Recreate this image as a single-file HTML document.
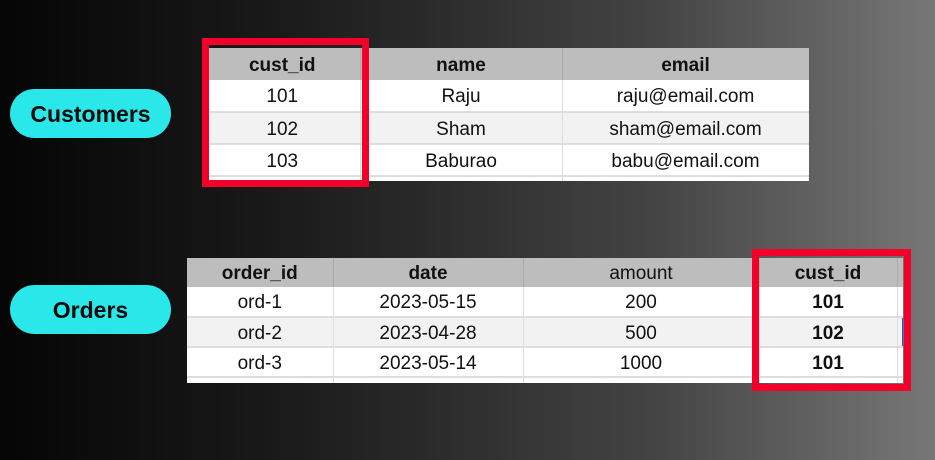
<!DOCTYPE html>
<html><head><style>
body{margin:0;width:935px;height:460px;overflow:hidden;background:linear-gradient(90deg,#050505 0%,#1a1a1a 30%,#444 70%,#777 100%);font-family:"Liberation Sans",sans-serif;position:relative}
.pill{position:absolute;left:10px;width:161px;height:49px;border-radius:25px;background:#2ae8ea;color:#0a0a0a;font-weight:bold;font-size:23px;display:flex;align-items:center;justify-content:center;padding-top:2px;box-sizing:border-box}
table{position:absolute;border-collapse:collapse;background:#fff;font-size:19px;color:#111;table-layout:fixed}
td,th{text-align:center;padding:3px 0 0 0;border-right:1px solid #ddd;border-bottom:2px solid #ddd}
th{background:#bdbdbd;font-weight:bold;border-right:1px solid #aaa;border-bottom:none}
tr.alt td{background:#f2f2f2}
.box{position:absolute;border:7px solid #f2002a}
</style></head><body>
<div class="pill" style="top:89px">Customers</div>
<div class="pill" style="top:285px">Orders</div>

<div style="position:absolute;left:205px;top:48px;width:604px;height:133px;overflow:hidden">
<table style="left:0;top:0;width:604px">
<col style="width:155px"><col style="width:202px"><col style="width:247px">
<tr style="height:32px"><th>cust_id</th><th>name</th><th>email</th></tr>
<tr style="height:32px"><td>101</td><td>Raju</td><td>raju@email.com</td></tr>
<tr class="alt" style="height:32px"><td>102</td><td>Sham</td><td>sham@email.com</td></tr>
<tr style="height:32px"><td>103</td><td>Baburao</td><td>babu@email.com</td></tr>
<tr style="height:32px"><td></td><td></td><td></td></tr>
</table></div>
<div class="box" style="left:202px;top:38px;width:153px;height:135px"></div>

<div style="position:absolute;left:187px;top:258px;width:716px;height:125px;overflow:hidden">
<table style="left:0;top:0;width:716px">
<col style="width:146px"><col style="width:190px"><col style="width:236px"><col style="width:138px"><col style="width:6px">
<tr style="height:29px"><th>order_id</th><th>date</th><th style="font-weight:normal">amount</th><th>cust_id</th><th></th></tr>
<tr style="height:30px"><td>ord-1</td><td>2023-05-15</td><td>200</td><td><b>101</b></td><td></td></tr>
<tr class="alt" style="height:30px"><td>ord-2</td><td>2023-04-28</td><td>500</td><td><b>102</b></td><td style="border-right:2px solid #3344ee"></td></tr>
<tr style="height:30px"><td>ord-3</td><td>2023-05-14</td><td>1000</td><td><b>101</b></td><td></td></tr>
<tr style="height:30px"><td></td><td></td><td></td><td></td><td></td></tr>
</table></div>
<div class="box" style="left:752px;top:249px;width:145px;height:128px"></div>
</body></html>
